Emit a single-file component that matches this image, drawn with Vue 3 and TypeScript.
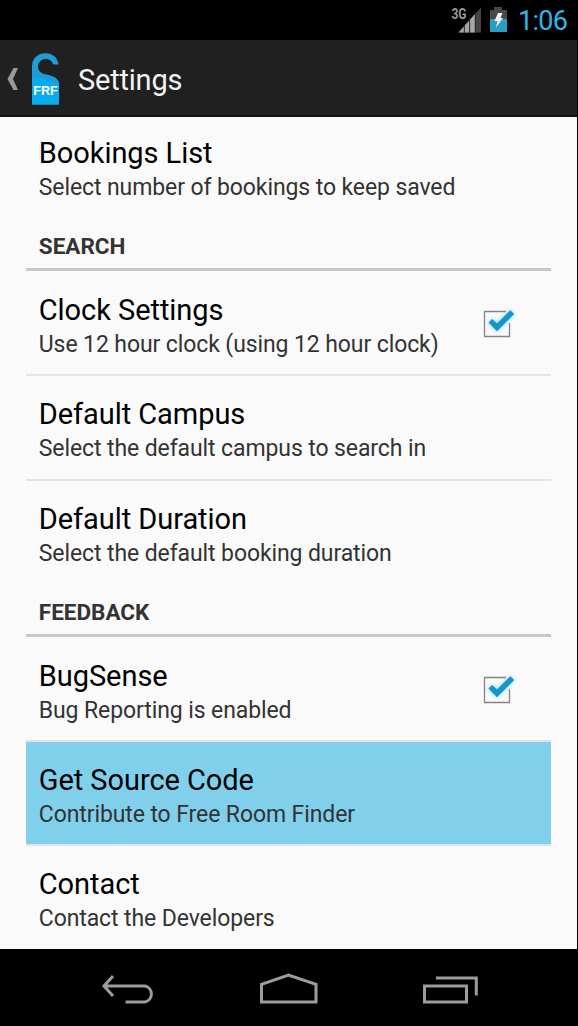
<script setup lang="ts">
interface Item {
  kind: 'row' | 'category'
  title: string
  summary?: string
  checked?: boolean
  selected?: boolean
  divider?: boolean
}

const items: Item[] = [
  { kind: 'row', title: 'Bookings List', summary: 'Select number of bookings to keep saved' },
  { kind: 'category', title: 'SEARCH' },
  { kind: 'row', title: 'Clock Settings', summary: 'Use 12 hour clock (using 12 hour clock)', checked: true, divider: true },
  { kind: 'row', title: 'Default Campus', summary: 'Select the default campus to search in', divider: true },
  { kind: 'row', title: 'Default Duration', summary: 'Select the default booking duration' },
  { kind: 'category', title: 'FEEDBACK' },
  { kind: 'row', title: 'BugSense', summary: 'Bug Reporting is enabled', checked: true, divider: true },
  { kind: 'row', title: 'Get Source Code', summary: 'Contribute to Free Room Finder', selected: true, divider: true },
  { kind: 'row', title: 'Contact', summary: 'Contact the Developers' },
]
</script>

<template>
  <div class="screen">
    <header class="status">
      <svg class="signal" width="32" height="36" viewBox="0 0 32 36">
        <path d="M7.500 32.500 30 7.500V32.500Z" fill="#444" />
        <path d="M7.500 32.500 24 14V32.500Z" fill="#a6a6a6" />
        <path d="M13.300 24V33M18.600 18V33M24.300 12V33" stroke="#222" stroke-width="1" />
        <text x="0.500" y="18.500" class="network" textLength="15" lengthAdjust="spacingAndGlyphs">3G</text>
      </svg>
      <svg class="battery" width="17" height="26" viewBox="0 0 17 26">
        <path d="M0 3H4V0H12V3H17V12H0Z" fill="#484848" />
        <path d="M0 12H17V25H0Z" fill="#2d9cc5" />
        <path d="M8 6H12.500L10.500 11H13L6 20.500 7.500 14H4.500Z" fill="#f2f2f2" />
      </svg>
      <span class="time">1:06</span>
    </header>

    <div class="bar">
      <svg class="up" width="12" height="24" viewBox="0 0 12 24">
        <path d="M6.500 1H11L6 12 11 23H6.500L0.500 12Z" fill="#999" />
      </svg>
      <svg class="logo" width="28" height="52" viewBox="0 0 28 52">
        <path d="M0 51.500V13.500C0 5 6 .3 13.500 .3C20.500 .3 25.500 4.500 26.700 11.500H21.300C20 8 17.500 6 14 6C9.500 6 6 9.500 6 13.500C6 18.500 9.500 20.500 14 21.500C21 23 27 24.500 27 31.500V51.500Z" fill="#219bd5" />
        <path d="M0 25C9 23.500 16 29.500 27 29.500V51.500H0Z" fill="#05acef" />
        <text x="1.300" y="42" class="mark" textLength="24.500" lengthAdjust="spacingAndGlyphs">FRF</text>
      </svg>
      <h1>Settings</h1>
    </div>

    <main class="content">
      <div class="list">
        <template v-for="item in items" :key="item.title">
          <h2 v-if="item.kind === 'category'" class="category">{{ item.title }}</h2>
          <div v-else class="row" :class="{ selected: item.selected, divider: item.divider }">
            <div class="texts">
              <div class="title">{{ item.title }}</div>
              <div class="summary">{{ item.summary }}</div>
            </div>
            <svg v-if="item.checked" class="check" width="40" height="40" viewBox="0 0 40 40">
              <path d="M30.500 22V35.500H5.500V10.500H27" fill="none" stroke="#858585" stroke-width="1.300" />
              <path class="tick" d="M9.500 21.600 13.200 18 18 22.600 31.300 9.200 35.200 13 18 30.300Z" fill="#1297ca" />
            </svg>
          </div>
        </template>
      </div>
    </main>

    <footer class="nav">
      <svg width="578" height="77" viewBox="0 0 578 77" fill="none" stroke="#9c9c9c" stroke-width="3">
        <path d="M113 27 104 37 113 47M104 37H145A8.200 8.200 0 0 1 145 53H125.500" />
        <path d="M261.500 53V35.400L288.500 26 316 35.400V53Z" />
        <path d="M424.500 37H466.500V53H424.500ZM436 29H476.300V46.500" />
      </svg>
    </footer>
  </div>
</template>

<style>
body {
  margin: 0;
  background: #000;
}
</style>

<style scoped>
.screen {
  width: 578px;
  height: 1026px;
  display: flex;
  flex-direction: column;
  overflow: hidden;
  background: #000;
  font-family: Roboto, "Liberation Sans", sans-serif;
}
.status {
  height: 40px;
  flex: none;
  display: flex;
  justify-content: flex-end;
  align-items: flex-start;
  box-sizing: border-box;
  padding-right: 10px;
}
.signal { margin-right: 7px; }
.network { font: bold 14px Roboto, sans-serif; fill: #999; }
.battery { margin: 7px 11px 0 0; }
.time {
  color: #33b5e5;
  font-size: 27px;
  line-height: 42px;
  letter-spacing: -0.7px;
  width: 50px;
  white-space: nowrap;
}
.bar {
  height: 77px;
  flex: none;
  display: flex;
  align-items: center;
  box-sizing: border-box;
  padding-left: 7px;
  background: #202020;
  border-bottom: 2px solid #121212;
  margin-right: 1px;
}
.up { margin-top: 2px; }
.logo { margin: 2px 18px 0 13px; }
.mark { font: bold 13.5px "Liberation Sans", sans-serif; fill: #fff; }
h1 {
  margin: 5px 0 0;
  color: #f3f3f3;
  font-size: 29px;
  font-weight: 400;
  line-height: 40px;
  letter-spacing: -0.2px;
}
.content {
  height: 832px;
  flex: none;
  margin-right: 1px;
  overflow: hidden;
  background-color: #fbfbfb;
  background-image:
    repeating-linear-gradient(90deg, transparent 0 3px, rgba(0, 0, 0, 0.008) 3px 4px),
    repeating-linear-gradient(transparent 0 3px, rgba(0, 0, 0, 0.008) 3px 4px);
}
.list {
  width: 525.5px;
  margin: -2px 0 0 25.8px;
}
.row {
  height: 104.3px;
  box-sizing: border-box;
  padding: 19px 32px 0 13px;
  display: flex;
  justify-content: space-between;
}
.row.divider { border-bottom: 2px solid #e4e4e4; }
.row.selected { background: #80d0ec; }
.title {
  color: #000;
  font-size: 29px;
  line-height: 38px;
  letter-spacing: -0.06px;
  white-space: nowrap;
}
.summary {
  color: #333;
  font-size: 23px;
  line-height: 32px;
  letter-spacing: -0.1px;
  white-space: nowrap;
}
.category {
  height: 51.7px;
  box-sizing: border-box;
  margin: 0;
  padding: 12px 0 0 13px;
  border-bottom: 3px solid #c8c8c8;
  color: #333;
  font-size: 22.5px;
  font-weight: 700;
  line-height: 30px;
}
.category + .row { margin-top: 1px; }
.check { margin-top: 10px; overflow: visible; }
.tick { filter: drop-shadow(0 0 2px rgba(51, 181, 229, 0.6)); }
.nav { height: 77px; }
.nav svg { display: block; }
</style>
